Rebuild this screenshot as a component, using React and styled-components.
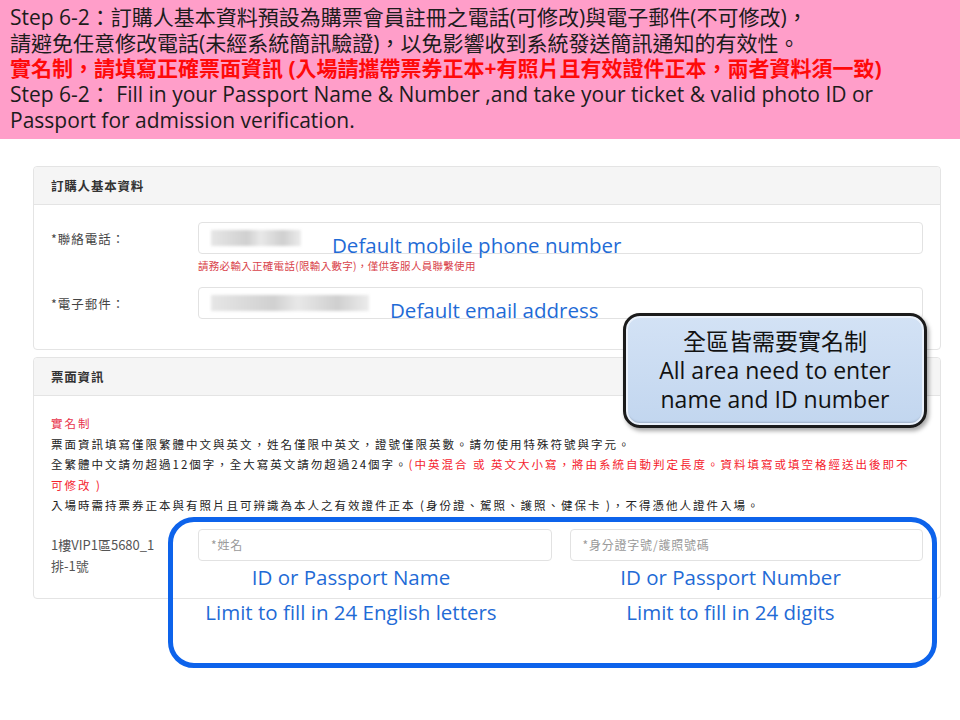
import styled, { createGlobalStyle } from "styled-components";

const GlobalStyle = createGlobalStyle`
  body {
    margin: 0;
    background: #fff;
    font-family: "Noto Sans CJK TC", sans-serif;
  }
`;

const Page = styled.div`
  position: relative;
  width: 960px;
  height: 720px;
  overflow: hidden;
  background: #fff;
`;

// pink instruction banner
const Banner = styled.div`
  box-sizing: border-box;
  height: 139px;
  background: #ff9ec9;
  padding: 5px 20px 5px 10px;
  font-family: "Open Sans", "Noto Sans CJK TC", sans-serif;
  font-size: 21px;
  line-height: 25.7px;
  color: #1c1c1c;
`;

const BannerLine = styled.div`
  white-space: nowrap;
  color: ${(props) => (props.$alert ? "#ff0a0a" : "inherit")};
  font-weight: ${(props) => (props.$alert ? "bold" : "normal")};
`;

const Content = styled.div`
  display: flex;
  flex-direction: column;
  gap: 7px;
  padding: 27px 19px 0 33px;
`;

const Card = styled.section`
  border: 1px solid #e4e4e4;
  border-radius: 4px;
  background: #fff;
  color: #333;
`;

const CardHeader = styled.div`
  height: 37px;
  display: flex;
  align-items: center;
  padding: 0 17px;
  background: #f5f5f5;
  border-bottom: 1px solid #e4e4e4;
  border-radius: 4px 4px 0 0;
  font-size: 12.5px;
  font-weight: bold;
  letter-spacing: 0.8px;
`;

const CardBody = styled.div`
  padding: ${(props) => props.$pad};
`;

const FieldRow = styled.div`
  display: grid;
  grid-template-columns: 147px 1fr;
  align-items: start;
  margin-top: ${(props) => props.$gap || 0}px;
`;

const Label = styled.div`
  height: 32px;
  display: flex;
  align-items: center;
  font-size: 12.5px;
  letter-spacing: 1px;
  color: #444;
`;

const Input = styled.div`
  box-sizing: border-box;
  height: 32px;
  display: flex;
  align-items: center;
  padding: 0 12px;
  border: 1px solid #e2e2e2;
  border-radius: 4px;
  background: #fff;
  font-size: 12px;
  color: #9a9a9a;
  letter-spacing: 0.8px;
`;

// pixelated placeholder for hidden personal data
const Blurred = styled.span`
  display: block;
  width: ${(props) => props.$w}px;
  height: 16px;
  background: linear-gradient(90deg, #e6e6e6, #d0d0d0 40%, #e8e8e8 55%, #cfcfcf 80%, #ececec);
  filter: blur(1.5px);
`;

const Hint = styled.div`
  margin-top: 5px;
  font-size: 10.5px;
  line-height: 14px;
  color: #d9434b;
  letter-spacing: 0.3px;
`;

const Notices = styled.div`
  padding-top: 2px;
`;

const Notice = styled.div`
  font-size: 11.5px;
  line-height: 20.5px;
  letter-spacing: 2px;
  color: #222;
`;

const Red = styled.span`
  color: ${(props) => (props.$soft ? "#e8344c" : "#f5222d")};
`;

const TicketRow = styled.div`
  display: grid;
  grid-template-columns: 129px 1fr 1fr;
  column-gap: 18px;
  margin-top: 13px;
`;

const Seat = styled.div`
  padding-top: 5px;
  font-size: 13px;
  line-height: 21px;
  color: #555;
  white-space: nowrap;
`;

// overlay annotations
const Note = styled.div`
  position: absolute;
  left: ${(props) => props.$x}px;
  top: ${(props) => props.$y}px;
  font-family: "Open Sans", sans-serif;
  font-size: 20.5px;
  line-height: 24px;
  color: #1f6bd6;
  white-space: nowrap;
`;

const Callout = styled.div`
  position: absolute;
  left: 623px;
  top: 313px;
  width: 304px;
  height: 115px;
  box-sizing: border-box;
  display: flex;
  flex-direction: column;
  align-items: center;
  justify-content: center;
  border: 3px solid #1b1b1b;
  border-radius: 17px;
  background: linear-gradient(#d3e2f5, #c2d6ef);
  box-shadow: inset 0 0 0 2px #eaf1fb, inset 0 -3px 2px #9fb0c6, 2px 3px 4px rgba(0, 0, 0, 0.35);
  font-family: "Open Sans", "Noto Sans CJK TC", sans-serif;
  font-size: 23px;
  line-height: 29px;
  color: #121212;
`;

const Frame = styled.div`
  position: absolute;
  left: 168px;
  top: 517px;
  width: 769px;
  height: 151px;
  box-sizing: border-box;
  border: 5px solid #0d63eb;
  border-radius: 26px;
  display: grid;
  grid-template-columns: 356px 403px;
  grid-auto-rows: 35px;
  align-content: start;
  padding-top: 43px;
  font-family: "Open Sans", sans-serif;
  font-size: 20.5px;
  color: #1f6bd6;
`;

const FrameText = styled.div`
  text-align: center;
  white-space: nowrap;
  line-height: 24px;
`;

const App = () => {
  return (
    <Page>
      <GlobalStyle />
      <Banner>
        <BannerLine>Step 6-2：訂購人基本資料預設為購票會員註冊之電話(可修改)與電子郵件(不可修改)，</BannerLine>
        <BannerLine>請避免任意修改電話(未經系統簡訊驗證)，以免影響收到系統發送簡訊通知的有效性。</BannerLine>
        <BannerLine $alert>實名制，請填寫正確票面資訊 (入場請攜帶票券正本+有照片且有效證件正本，兩者資料須一致)</BannerLine>
        <div>
          Step 6-2： Fill in your Passport Name &amp; Number ,and take your ticket &amp; valid photo ID or
          Passport for admission verification.
        </div>
      </Banner>

      <Content>
        <Card>
          <CardHeader>訂購人基本資料</CardHeader>
          <CardBody $pad="17px 17px 30px">
            <FieldRow>
              <Label>*聯絡電話：</Label>
              <div>
                <Input>
                  <Blurred $w={90} />
                </Input>
                <Hint>請務必輸入正確電話(限輸入數字)，僅供客服人員聯繫使用</Hint>
              </div>
            </FieldRow>
            <FieldRow $gap={14}>
              <Label>*電子郵件：</Label>
              <Input>
                <Blurred $w={158} />
              </Input>
            </FieldRow>
          </CardBody>
        </Card>

        <Card>
          <CardHeader>票面資訊</CardHeader>
          <CardBody $pad="15px 17px 22px">
            <Notices>
              <Notice>
                <Red $soft>實名制</Red>
              </Notice>
              <Notice>票面資訊填寫僅限繁體中文與英文，姓名僅限中英文，證號僅限英數。請勿使用特殊符號與字元。</Notice>
              <Notice>
                全繁體中文請勿超過12個字，全大寫英文請勿超過24個字。
                <Red>
                  (中英混合 或 英文大小寫，將由系統自動判定長度。資料填寫或填空格經送出後即不
                  <br />
                  可修改 )
                </Red>
              </Notice>
              <Notice>入場時需持票券正本與有照片且可辨識為本人之有效證件正本 (身份證、駕照、護照、健保卡 )，不得憑他人證件入場。</Notice>
            </Notices>
            <TicketRow>
              <Seat>
                1樓VIP1區5680_1
                <br />
                排-1號
              </Seat>
              <Input>*姓名</Input>
              <Input>*身分證字號/護照號碼</Input>
            </TicketRow>
          </CardBody>
        </Card>
      </Content>

      <Note $x={332} $y={233}>Default mobile phone number</Note>
      <Note $x={390} $y={298}>Default email address</Note>

      <Callout>
        <div>全區皆需要實名制</div>
        <div>All area need to enter</div>
        <div>name and ID number</div>
      </Callout>

      <Frame>
        <FrameText>ID or Passport Name</FrameText>
        <FrameText>ID or Passport Number</FrameText>
        <FrameText>Limit to fill in 24 English letters</FrameText>
        <FrameText>Limit to fill in 24 digits</FrameText>
      </Frame>
    </Page>
  );
};

export default App;
